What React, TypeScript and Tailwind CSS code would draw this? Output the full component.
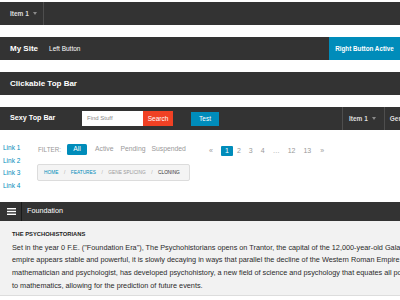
import React from 'react';

const Caret = () => (
  <span className="h-0 w-0 border-x-[2.5px] border-t-[3px] border-x-transparent border-t-[#8a8a8a]" />
);

const Hamburger = () => (
  <svg width="9" height="7" viewBox="0 0 9 7" aria-hidden>
    <rect x="0" y="0" width="9" height="1.4" fill="#fff" />
    <rect x="0" y="2.8" width="9" height="1.4" fill="#fff" />
    <rect x="0" y="5.6" width="9" height="1.4" fill="#fff" />
  </svg>
);

const bar = 'flex h-[23px] shrink-0 items-stretch bg-[#333333] text-white whitespace-nowrap';

const crumbs = [
  { label: 'Home', cls: 'text-[#008cba]' },
  { label: 'Features', cls: 'text-[#008cba]' },
  { label: 'Gene Splicing', cls: 'text-[#999999]' },
  { label: 'Cloning', cls: 'text-[#333333]' },
];

const paragraph = [
  'Set in the year 0 F.E. ("Foundation Era"), The Psychohistorians opens on Trantor, the capital of the 12,000-year-old Galactic Empire. Though the',
  'empire appears stable and powerful, it is slowly decaying in ways that parallel the decline of the Western Roman Empire. Hari Seldon, a',
  'mathematician and psychologist, has developed psychohistory, a new field of science and psychology that equates all possibilities in large societies',
  'to mathematics, allowing for the prediction of future events.',
];

export default function App() {
  return (
    <div className="flex h-[300px] w-[400px] flex-col overflow-hidden bg-white font-['Liberation_Sans',Arial,sans-serif]">
      {/* top bars */}
      <div className="flex flex-col gap-[12px] pt-[2px]">
        <div className={bar}>
          <div className="flex items-center gap-[4px] border-r border-[#4e4e4e] pl-[10px] pr-[6px]">
            <span className="text-[6.5px] font-bold text-[#dddddd]">Item 1</span>
            <Caret />
          </div>
        </div>

        <div className={bar}>
          <div className="flex items-center pl-[10px]">
            <span className="text-[8px] font-bold">My Site</span>
            <span className="ml-[11px] text-[6.5px]">Left Button</span>
          </div>
          <div className="ml-auto flex w-[71px] items-center justify-center bg-[#008cba] text-[6.3px] font-bold">
            Right Button Active
          </div>
        </div>

        <div className={bar}>
          <div className="flex items-center pl-[10px]">
            <span className="text-[8px] font-bold">Clickable Top Bar</span>
          </div>
        </div>

        <div className={bar}>
          <div className="flex w-[82px] shrink-0 items-center pl-[10px]">
            <span className="text-[7.2px] font-bold">Sexy Top Bar</span>
          </div>
          <div className="flex shrink-0 items-center">
            <div className="flex h-[15px] w-[61px] items-center bg-white pl-[5px] text-[6px] text-[#888888]">
              Find Stuff
            </div>
            <div className="flex h-[15px] w-[30px] items-center justify-center bg-[#f04124] text-[6.5px]">
              Search
            </div>
            <div className="ml-[18px] flex h-[14px] w-[28px] items-center justify-center bg-[#008cba] text-[6.5px]">
              Test
            </div>
          </div>
          <div className="ml-[123px] flex shrink-0 items-center gap-[4px] border-x border-[#4e4e4e] pl-[6px] pr-[8px]">
            <span className="text-[6.5px] font-bold text-[#dddddd]">Item 1</span>
            <Caret />
          </div>
          <div className="flex shrink-0 items-center pl-[5px]">
            <span className="text-[6.5px] font-bold text-[#dddddd]">General</span>
          </div>
        </div>
      </div>

      {/* middle: side nav, sub nav, breadcrumbs, pagination */}
      <div className="flex h-[72px] shrink-0">
        <ul className="w-[37px] shrink-0 pl-[3px] pt-[12px] text-[6.5px] leading-[12.67px] text-[#008cba]">
          <li>Link 1</li>
          <li>Link 2</li>
          <li>Link 3</li>
          <li>Link 4</li>
        </ul>

        <div className="flex w-[168px] shrink-0 flex-col pt-[14px]">
          <div className="flex h-[11px] items-center whitespace-nowrap text-[6.8px] text-[#999999]">
            <span className="ml-[1px] text-[6.3px] uppercase">Filter:</span>
            <span className="ml-[6px] flex h-[11px] w-[20px] items-center justify-center rounded-[1.5px] bg-[#008cba] text-white">
              All
            </span>
            <span className="ml-[8px]">Active</span>
            <span className="ml-[7px]">Pending</span>
            <span className="ml-[6px]">Suspended</span>
          </div>

          <div className="mt-[9px] flex h-[17px] w-[153px] items-center rounded-[2px] border border-[#dcdcdc] bg-[#f4f4f4] pl-[6px] text-[4.8px] uppercase whitespace-nowrap">
            {crumbs.map((c, i) => (
              <React.Fragment key={c.label}>
                {i > 0 && <span className="mx-[5.5px] text-[#aaaaaa]">/</span>}
                <span className={c.cls}>{c.label}</span>
              </React.Fragment>
            ))}
          </div>
        </div>

        <div className="mt-[16px] flex h-[10px] items-center text-[7px] text-[#999999] whitespace-nowrap">
          <span className="mr-[4px] px-[4px]">«</span>
          <span className="flex h-[10px] w-[12px] items-center justify-center rounded-[1px] bg-[#008cba] text-white">1</span>
          <span className="px-[4px]">2</span>
          <span className="px-[4px]">3</span>
          <span className="px-[4px]">4</span>
          <span className="px-[4px]">…</span>
          <span className="px-[4px]">12</span>
          <span className="px-[4px]">13</span>
          <span className="ml-[1px] px-[4px]">»</span>
        </div>
      </div>

      {/* tab bar */}
      <div className="flex h-[19px] shrink-0 items-stretch bg-[#333333] text-white">
        <div className="flex w-[22px] items-center justify-center border-r border-[#1a1a1a] pl-[1px]">
          <Hamburger />
        </div>
        <div className="flex items-center pl-[5px] text-[7.2px]">Foundation</div>
      </div>

      {/* panel */}
      <div className="h-[75px] shrink-0 border-b border-[#dddddd] bg-[#f2f2f2] px-[12px] pt-[9.5px] whitespace-nowrap text-[#2b2b2b]">
        <h5 className="text-[5.8px] font-bold leading-[7px] text-[#222222]">THE PSYCHOHISTORIANS</h5>
        <p className="mt-[4px] text-[7.3px] leading-[12.7px]">
          {paragraph.map((line) => (
            <span key={line} className="block">
              {line}
            </span>
          ))}
        </p>
      </div>
    </div>
  );
}
